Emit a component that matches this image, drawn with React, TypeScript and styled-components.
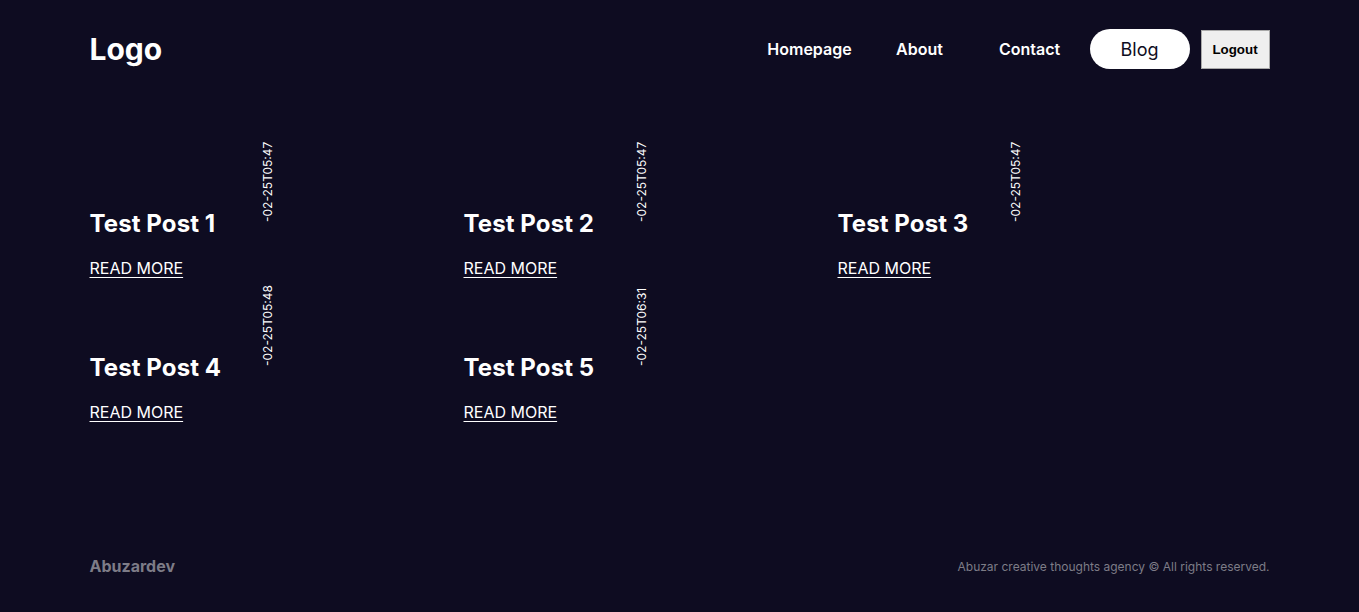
import React from "react";
import styled, { createGlobalStyle } from "styled-components";

const GlobalStyle = createGlobalStyle`
  html, body {
    margin: 0;
    padding: 0;
    background: #0e0c21;
  }
  body {
    font-family: Inter, "Noto Sans", sans-serif;
    color: #ffffff;
  }
  * { box-sizing: border-box; }
`;

const Page = styled.div`
  min-height: 612px;
  display: flex;
  flex-direction: column;
  background: #0e0c21;
`;

const Container = styled.div`
  width: 1180px;
  margin: 0 auto;
`;

const FooterWrap = styled(Container)`
  margin-top: auto;
`;

const Header = styled.header`
  display: flex;
  align-items: center;
  justify-content: space-between;
  padding-top: 29px;
  height: 69px;
`;

const Logo = styled.div`
  font-size: 30px;
  font-weight: 700;
  line-height: 40px;
`;

const Nav = styled.nav`
  display: flex;
  align-items: center;
  gap: 10px;
`;

const NavLink = styled.a`
  width: 100px;
  text-align: center;
  font-size: 16px;
  font-weight: 600;
  color: #ffffff;
  text-decoration: none;
`;

const BlogButton = styled.a`
  width: 100px;
  height: 40px;
  border-radius: 20px;
  background: #ffffff;
  color: #0e0c21;
  font-size: 18px;
  font-weight: 400;
  display: flex;
  align-items: center;
  justify-content: center;
  text-decoration: none;
`;

const LogoutButton = styled.button`
  width: 69px;
  height: 39px;
  margin-left: 1px;
  background: #efefef;
  border: 1px solid #a9a9a9;
  color: #000000;
  font-family: "Liberation Sans", Arial, sans-serif;
  font-size: 13.33px;
  font-weight: 700;
  padding: 0;
`;

const Posts = styled.main`
  display: grid;
  grid-template-columns: repeat(3, 374px);
  row-gap: 10px;
  margin-top: 75px;
`;

const Card = styled.article`
  display: flex;
  align-items: flex-start;
  height: 134px;
`;

const CardBody = styled.div`
  width: 172px;
  padding-top: 65px;
  display: flex;
  flex-direction: column;
  align-items: flex-start;
`;

const Title = styled.h2`
  margin: 0;
  font-size: 24px;
  font-weight: 700;
  line-height: 30px;
  letter-spacing: 0.1px;
  white-space: nowrap;
`;

const ReadMore = styled.a`
  margin-top: 20px;
  font-size: 16px;
  line-height: 19px;
  color: #ffffff;
  text-decoration: underline;
  text-underline-offset: 3px;
`;

const DateLabel = styled.span`
  writing-mode: vertical-rl;
  transform: rotate(180deg);
  font-size: 12px;
  line-height: 12px;
  height: 78px;
  color: #ffffff;
  white-space: nowrap;
`;

const Footer = styled.footer`
  display: flex;
  align-items: center;
  justify-content: space-between;
  padding-bottom: 36px;
`;

const Brand = styled.div`
  font-size: 16px;
  font-weight: 700;
  color: #7d7c87;
`;

const Copyright = styled.div`
  font-size: 12px;
  color: #7d7c87;
`;

const posts = [
  { title: "Test Post 1", date: "-02-25T05:47" },
  { title: "Test Post 2", date: "-02-25T05:47" },
  { title: "Test Post 3", date: "-02-25T05:47" },
  { title: "Test Post 4", date: "-02-25T05:48" },
  { title: "Test Post 5", date: "-02-25T06:31" },
];

export default function App() {
  return (
    <Page>
      <GlobalStyle />
      <Container>
        <Header>
          <Logo>Logo</Logo>
          <Nav>
            <NavLink href="#">Homepage</NavLink>
            <NavLink href="#">About</NavLink>
            <NavLink href="#">Contact</NavLink>
            <BlogButton href="#">Blog</BlogButton>
            <LogoutButton>Logout</LogoutButton>
          </Nav>
        </Header>
        <Posts>
          {posts.map((p) => (
            <Card key={p.title}>
              <CardBody>
                <Title>{p.title}</Title>
                <ReadMore href="#">READ MORE</ReadMore>
              </CardBody>
              <DateLabel>{p.date}</DateLabel>
            </Card>
          ))}
        </Posts>
      </Container>
      <FooterWrap>
        <Footer>
          <Brand>Abuzardev</Brand>
          <Copyright>Abuzar creative thoughts agency © All rights reserved.</Copyright>
        </Footer>
      </FooterWrap>
    </Page>
  );
}
